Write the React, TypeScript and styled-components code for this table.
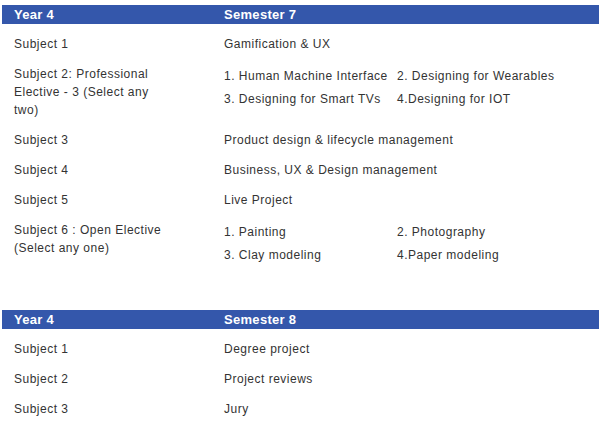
import styled, { createGlobalStyle } from 'styled-components'

const GlobalStyle = createGlobalStyle`
  body {
    margin: 0;
    background: #ffffff;
    font-family: "Liberation Sans", Arial, sans-serif;
  }
`

const Page = styled.div`
  padding: 5px 4px 0 2px;
  display: flex;
  flex-direction: column;
  gap: 40px;
`

const Table = styled.section`
  display: flex;
  flex-direction: column;
`

const HeadRow = styled.div`
  display: grid;
  grid-template-columns: 210px 1fr;
  height: 19px;
  align-items: center;
  background-color: #3457ab;
  color: #ffffff;
  font-size: 13px;
  font-weight: 700;
  letter-spacing: 0.3px;
  margin-bottom: 5px;
`

const HeadCell = styled.div`
  padding-left: 12px;
  line-height: 19px;
`

const Row = styled.div`
  display: grid;
  grid-template-columns: 210px 1fr;
  padding: 6px 0;
  color: #333333;
  font-size: 12px;
  line-height: 18px;
  letter-spacing: 0.5px;
`

const Cell = styled.div<{ $wide?: boolean }>`
  padding-left: 12px;
  padding-right: ${(p) => (p.$wide ? '10px' : '44px')};
`

const Options = styled.div`
  display: grid;
  grid-template-columns: 173px 1fr;
  align-content: start;
  row-gap: 5px;
  padding-left: 12px;
  padding-top: 2px;
  white-space: nowrap;
`

type Subject = {
  name: string
  course?: string
  options?: string[]
}

type Semester = {
  year: string
  title: string
  subjects: Subject[]
}

const semesters: Semester[] = [
  {
    year: 'Year 4',
    title: 'Semester 7',
    subjects: [
      { name: 'Subject 1', course: 'Gamification & UX' },
      {
        name: 'Subject 2: Professional Elective - 3 (Select any two)',
        options: [
          '1. Human Machine Interface',
          '2. Designing for Wearables',
          '3. Designing for Smart TVs',
          '4.Designing for IOT',
        ],
      },
      { name: 'Subject 3', course: 'Product design & lifecycle management' },
      { name: 'Subject 4', course: 'Business, UX & Design management' },
      { name: 'Subject 5', course: 'Live Project' },
      {
        name: 'Subject 6 : Open Elective (Select any one)',
        options: ['1. Painting', '2. Photography', '3. Clay modeling', '4.Paper modeling'],
      },
    ],
  },
  {
    year: 'Year 4',
    title: 'Semester 8',
    subjects: [
      { name: 'Subject 1', course: 'Degree project' },
      { name: 'Subject 2', course: 'Project reviews' },
      { name: 'Subject 3', course: 'Jury' },
    ],
  },
]

export default function App() {
  return (
    <>
      <GlobalStyle />
      <Page>
        {semesters.map((sem) => (
          <Table key={sem.title}>
            <HeadRow>
              <HeadCell>{sem.year}</HeadCell>
              <HeadCell>{sem.title}</HeadCell>
            </HeadRow>
            {sem.subjects.map((s) => (
              <Row key={s.name}>
                <Cell>{s.name}</Cell>
                {s.options ? (
                  <Options>
                    {s.options.map((o) => (
                      <div key={o}>{o}</div>
                    ))}
                  </Options>
                ) : (
                  <Cell $wide>{s.course}</Cell>
                )}
              </Row>
            ))}
          </Table>
        ))}
      </Page>
    </>
  )
}
